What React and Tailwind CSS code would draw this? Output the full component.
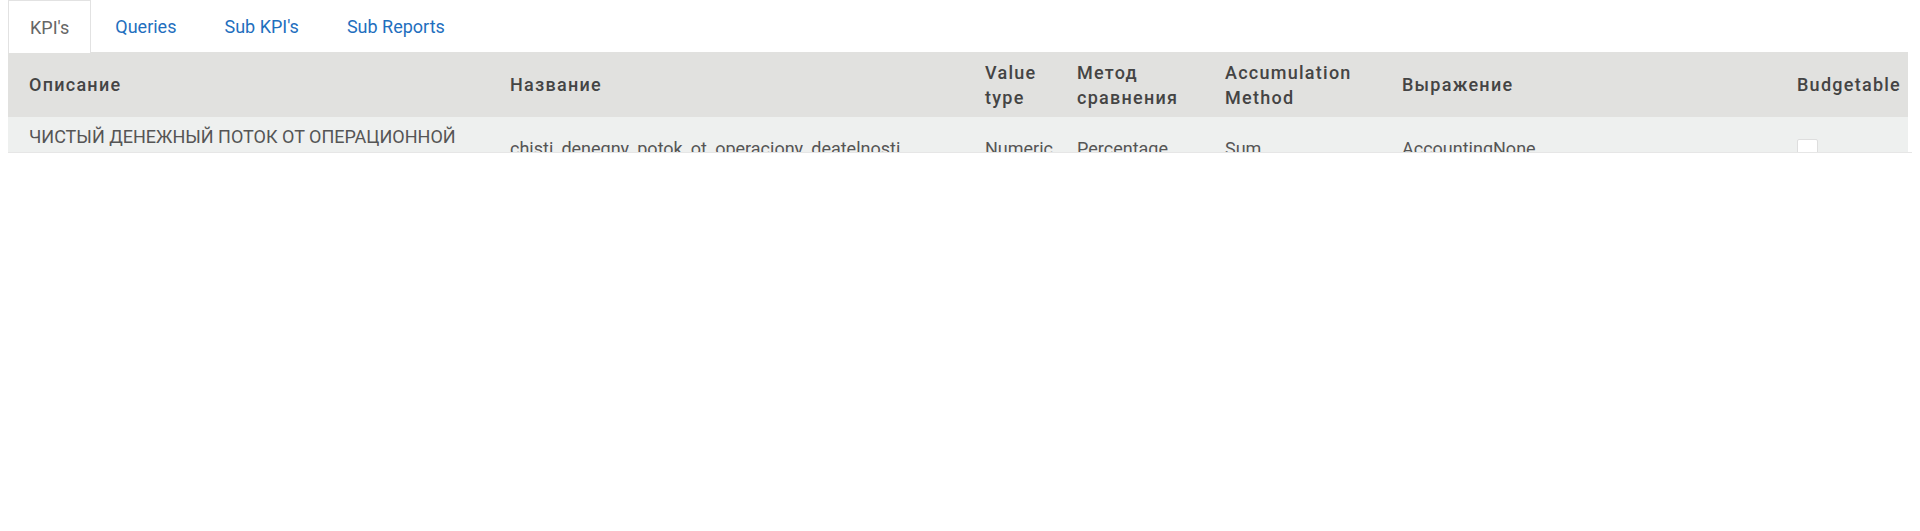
import React from 'react';

const columns = [
  { key: 'description', label: 'Описание', width: 'w-[481px]' },
  { key: 'name', label: 'Название', width: 'w-[475px]' },
  { key: 'valueType', label: 'Value type', width: 'w-[92px]' },
  { key: 'compare', label: 'Метод сравнения', width: 'w-[148px]' },
  { key: 'accumulation', label: 'Accumulation Method', width: 'w-[177px]' },
  { key: 'expression', label: 'Выражение', width: 'w-[395px]' },
  { key: 'budgetable', label: 'Budgetable', width: 'w-[132px]' },
];

const rows = [
  {
    id: 1,
    description: 'ЧИСТЫЙ ДЕНЕЖНЫЙ ПОТОК ОТ ОПЕРАЦИОННОЙ ДЕЯТЕЛЬНОСТИ',
    name: 'chisti_denegny_potok_ot_operaciony_deatelnosti',
    valueType: 'Numeric',
    compare: 'Percentage',
    accumulation: 'Sum',
    expression: 'AccountingNone',
    budgetable: false,
  },
];

const tabs = ["KPI's", 'Queries', "Sub KPI's", 'Sub Reports'];

const App = () => {
  return (
    <div className="min-h-[531px] bg-white px-2 font-['Roboto',sans-serif]">
      {/* Tabs */}
      <div className="flex h-[52px] items-end">
        {tabs.map((tab, i) => (
          <div
            key={tab}
            className={
              i === 0
                ? 'flex h-[53px] items-center border-x border-t border-[#e2e2e2] bg-white px-[21px] text-[18px] text-[#666] -mb-px'
                : 'flex h-[52px] items-center px-[24px] text-[18px] text-[#1f6fbe]'
            }
          >
            {tab}
          </div>
        ))}
      </div>

      {/* Table */}
      <div className="h-[101px] overflow-hidden border-b border-[#e6e6e6]">
        <table className="w-[1900px] table-fixed border-collapse">
          <thead>
            <tr className="h-[65px] bg-[#e1e1df]">
              {columns.map((col) => (
                <th
                  key={col.key}
                  className={`${col.width} px-[21px] py-[7px] text-left align-middle text-[18px] leading-[25px] font-medium tracking-[0.07em] text-[#444]`}
                >
                  {col.label}
                </th>
              ))}
            </tr>
          </thead>
          <tbody>
            {rows.map((row) => (
              <tr key={row.id} className="bg-[#eef0ef]">
                {columns.map((col) => (
                  <td
                    key={col.key}
                    className="px-[21px] py-[8px] align-middle text-[18px] leading-[24px] text-[#555]"
                  >
                    {col.key === 'budgetable' ? (
                      <span className="block h-[21px] w-[21px] rounded-[2px] border border-[#dedede] bg-white" />
                    ) : (
                      row[col.key]
                    )}
                  </td>
                ))}
              </tr>
            ))}
          </tbody>
        </table>
      </div>
    </div>
  );
};

export default App;
